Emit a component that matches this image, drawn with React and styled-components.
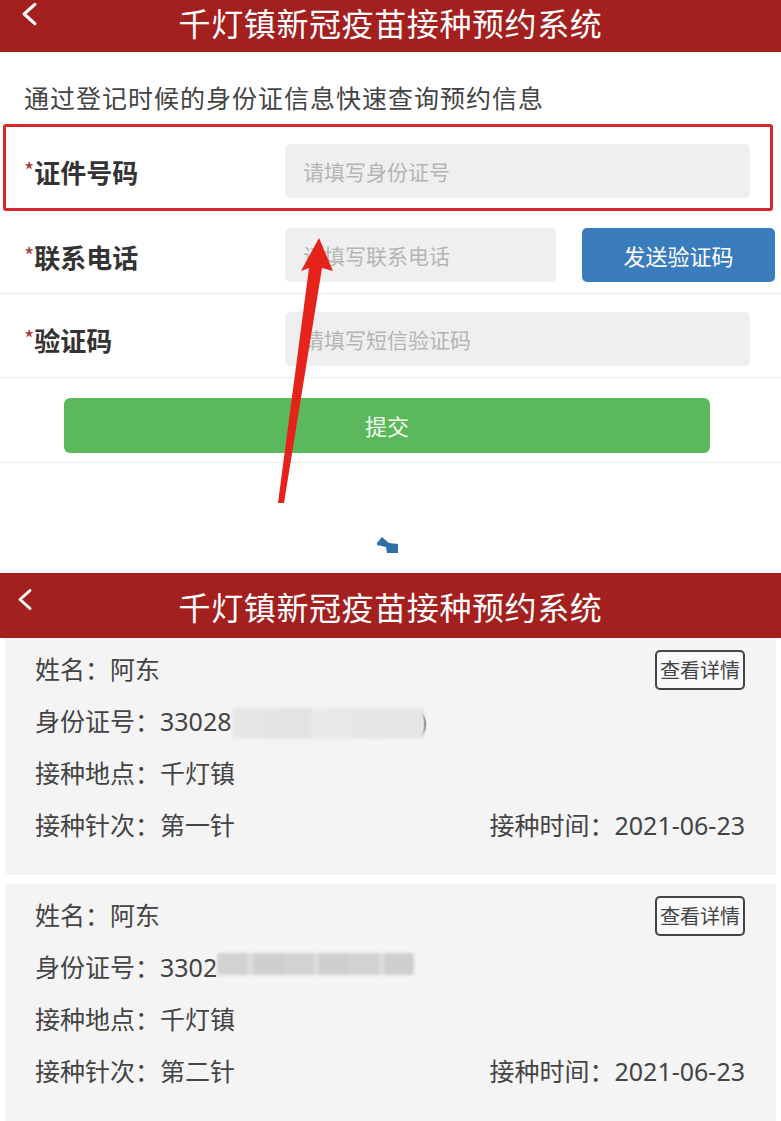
import React from "react";
import styled, { createGlobalStyle, css } from "styled-components";

const GlobalStyle = createGlobalStyle`
  html, body { margin: 0; padding: 0; background: #ffffff; }
  * { box-sizing: border-box; }
`;

const Page = styled.div`
  width: 781px;
  background: #ffffff;
  font-family: "Noto Sans CJK SC", "Noto Sans", sans-serif;
  color: #333;
`;

const Screen = styled.section`
  position: relative;
  height: ${(p) => p.$h}px;
  background: #ffffff;
  overflow: hidden;
`;

const Header = styled.header`
  display: grid;
  grid-template-columns: 1fr auto 1fr;
  align-items: center;
  height: ${(p) => p.$h}px;
  padding-bottom: ${(p) => p.$padBottom}px;
  background: #a3201f;
  color: #fff;
`;

const Back = styled.div`
  justify-self: start;
  align-self: start;
  margin-top: ${(p) => p.$top}px;
  margin-left: ${(p) => p.$left}px;
  display: flex;
`;

const Title = styled.h1`
  margin: 0;
  font-size: 32px;
  font-weight: 400;
  letter-spacing: 0.6px;
  line-height: 40px;
  color: #fff;
  white-space: nowrap;
`;

const Subtitle = styled.div`
  height: 72px;
  display: flex;
  align-items: flex-end;
  padding: 0 0 12px 24px;
  font-size: 25px;
  letter-spacing: 1px;
  line-height: 30px;
  color: #444;
`;

const FieldRow = styled.div`
  display: flex;
  align-items: center;
  height: ${(p) => p.$h}px;
  padding-top: 6px;
  ${(p) =>
    p.$highlight
      ? css`
          margin: 0 8px 0 3px;
          padding-left: 18px;
          border: 3px solid #d6282b;
          border-radius: 3px;
        `
      : css`
          padding-left: 24px;
          border-bottom: 1px solid #ededed;
        `}
`;

const Label = styled.div`
  width: 261px;
  flex: none;
  font-size: 26px;
  font-weight: 700;
  line-height: 32px;
  color: #333;
`;

const Star = styled.span`
  color: #b03030;
  font-weight: 400;
  font-size: 22px;
  vertical-align: 4px;
`;

const Input = styled.input`
  width: ${(p) => p.$w}px;
  height: 54px;
  flex: none;
  border: none;
  outline: none;
  border-radius: 5px;
  background: #efefef;
  padding: 0 0 0 18px;
  font-family: inherit;
  font-size: 21px;
  color: #333;
  &::placeholder {
    color: #b5b5b5;
  }
`;

const SendButton = styled.button`
  width: 193px;
  height: 54px;
  margin-left: 26px;
  flex: none;
  border: none;
  border-radius: 5px;
  background: #3b7cbd;
  color: #fff;
  font-family: inherit;
  font-size: 22px;
  cursor: pointer;
`;

const ActionRow = styled.div`
  height: 85px;
  display: flex;
  align-items: center;
  padding: 10px 0 0 64px;
  border-bottom: 1px solid #ededed;
`;

const SubmitButton = styled.button`
  width: 646px;
  height: 55px;
  border: none;
  border-radius: 6px;
  background: #5cb85c;
  color: #f4fff0;
  font-family: inherit;
  font-size: 22px;
  cursor: pointer;
`;

const ArrowOverlay = styled.svg`
  position: absolute;
  left: 0;
  top: 0;
  pointer-events: none;
`;

const Spacer = styled.div`
  height: 70px;
  display: flex;
  justify-content: center;
  padding-top: 34px;
  padding-right: 6px;
`;

const Card = styled.div`
  margin: ${(p) => p.$top}px 5px 0 5px;
  padding: 5px 31px 24px 30px;
  background: #f4f4f4;
`;

const InfoRow = styled.div`
  height: 52px;
  display: flex;
  align-items: center;
  justify-content: space-between;
  font-family: "Noto Sans", "Noto Sans CJK SC", sans-serif;
  font-size: 25px;
  line-height: 32px;
  color: #444;
`;

const InfoText = styled.span`
  display: flex;
  align-items: center;
  white-space: nowrap;
`;

const DetailButton = styled.button`
  width: 90px;
  height: 40px;
  border: 2px solid #444;
  border-radius: 5px;
  background: #fafafa;
  color: #444;
  font-family: "Noto Sans CJK SC", sans-serif;
  font-size: 20px;
  padding: 0;
  line-height: 1;
  margin-top: 2px;
`;

const Blur = styled.span`
  display: inline-block;
  width: ${(p) => (p.$variant === "smooth" ? 192 : 197)}px;
  height: ${(p) => (p.$variant === "smooth" ? 31 : 22)}px;
  margin-top: ${(p) => (p.$variant === "smooth" ? 4 : -6)}px;
  border-radius: 3px;
  filter: blur(1.5px);
  background: ${(p) =>
    p.$variant === "smooth"
      ? "linear-gradient(90deg, #e6e6e6 0%, #e2e2e2 40%, #e9e9e9 42%, #e4e4e4 100%)"
      : "repeating-linear-gradient(90deg, #d2d2d2 0px, #d2d2d2 30px, #dcdcdc 30px, #dcdcdc 36px, #cfcfcf 36px, #cfcfcf 66px)"};
`;

const Paren = styled.span`
  color: #777;
  margin-left: -4px;
`;

function Chevron({ w, h }) {
  return (
    <svg width={w} height={h} viewBox="0 0 16 22" fill="none">
      <polyline
        points="13,2 3,11 13,20"
        stroke="#ffffff"
        strokeWidth="3"
        strokeLinecap="round"
        strokeLinejoin="round"
      />
    </svg>
  );
}

function BlueMark() {
  return (
    <svg width="22" height="17" viewBox="0 0 22 17">
      <polygon points="0,6 5,0 12,6 21,7 21,16 10,16 9,10 0,8" fill="#2f6fa8" />
    </svg>
  );
}

function RedArrow() {
  return (
    <ArrowOverlay width="781" height="503" viewBox="0 0 781 503">
      <polygon
        points="319,238 333,271 322,268 284,503 278,503 309,268 301,271"
        fill="#e5231b"
      />
    </ArrowOverlay>
  );
}

const records = [
  { id: "33028", blur: "smooth", dose: "第一针", top: 0 },
  { id: "3302", blur: "pixel", dose: "第二针", top: 9 },
];

export default function App() {
  return (
    <Page>
      <GlobalStyle />
      <Screen $h={503}>
        <Header $h={52} $padBottom={8}>
          <Back $top={2} $left={21}>
            <Chevron w={17} h={24} />
          </Back>
          <Title>千灯镇新冠疫苗接种预约系统</Title>
          <span />
        </Header>
        <Subtitle>通过登记时候的身份证信息快速查询预约信息</Subtitle>
        <FieldRow $h={87} $highlight>
          <Label>
            <Star>*</Star>证件号码
          </Label>
          <Input $w={465} placeholder="请填写身份证号" />
        </FieldRow>
        <FieldRow $h={83}>
          <Label>
            <Star>*</Star>联系电话
          </Label>
          <Input $w={271} placeholder="请填写联系电话" />
          <SendButton>发送验证码</SendButton>
        </FieldRow>
        <FieldRow $h={84}>
          <Label>
            <Star>*</Star>验证码
          </Label>
          <Input $w={465} placeholder="请填写短信验证码" />
        </FieldRow>
        <ActionRow>
          <SubmitButton>提交</SubmitButton>
        </ActionRow>
        <RedArrow />
      </Screen>
      <Spacer>
        <BlueMark />
      </Spacer>
      <Screen $h={548}>
        <Header $h={65} $padBottom={0}>
          <Back $top={15} $left={17}>
            <Chevron w={16} h={23} />
          </Back>
          <Title>千灯镇新冠疫苗接种预约系统</Title>
          <span />
        </Header>
        {records.map((r, i) => (
          <Card key={i} $top={r.top}>
            <InfoRow>
              <InfoText>姓名：阿东</InfoText>
              <DetailButton>查看详情</DetailButton>
            </InfoRow>
            <InfoRow>
              <InfoText>
                身份证号：{r.id}
                <Blur $variant={r.blur} />
                {r.blur === "smooth" && <Paren>)</Paren>}
              </InfoText>
            </InfoRow>
            <InfoRow>
              <InfoText>接种地点：千灯镇</InfoText>
            </InfoRow>
            <InfoRow>
              <InfoText>接种针次：{r.dose}</InfoText>
              <InfoText>接种时间：2021-06-23</InfoText>
            </InfoRow>
          </Card>
        ))}
      </Screen>
    </Page>
  );
}
